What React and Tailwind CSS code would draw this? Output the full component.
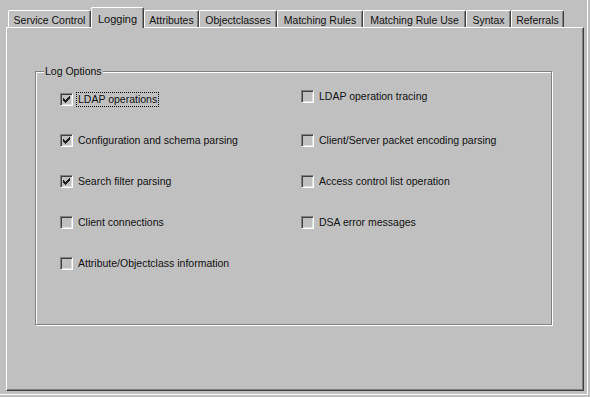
import React from 'react';

const tabs = [
  { label: 'Service Control', w: 'w-[83px]' },
  { label: 'Logging', w: 'w-[53px]', active: true },
  { label: 'Attributes', w: 'w-[55px]' },
  { label: 'Objectclasses', w: 'w-[78px]' },
  { label: 'Matching Rules', w: 'w-[86px]' },
  { label: 'Matching Rule Use', w: 'w-[103px]' },
  { label: 'Syntax', w: 'w-[45px]' },
  { label: 'Referrals', w: 'w-[53px]' },
];

const leftOptions = [
  { label: 'LDAP operations', checked: true, focused: true },
  { label: 'Configuration and schema parsing', checked: true },
  { label: 'Search filter parsing', checked: true },
  { label: 'Client connections' },
  { label: 'Attribute/Objectclass information' },
];

const rightOptions = [
  { label: 'LDAP operation tracing' },
  { label: 'Client/Server packet encoding parsing' },
  { label: 'Access control list operation' },
  { label: 'DSA error messages' },
];

function Checkbox({ checked }) {
  return (
    <div className="w-[13px] h-[13px] shrink-0 border-t border-l border-[#808080] border-r-white border-b-white border-r border-b bg-[#c0c0c0] shadow-[inset_1px_1px_0_#404040,inset_-1px_-1px_0_#dfdfdf] flex items-center justify-center">
      {checked && (
        <svg width="7" height="7" viewBox="0 0 7 7" shapeRendering="crispEdges" className="text-[#202020]">
          <path fill="currentColor" d="M6 0h1v3h-1zM5 1h1v3h-1zM4 2h1v3h-1zM3 3h1v3h-1zM2 4h1v3h-1zM1 3h1v3h-1zM0 2h1v3h-1z" />
        </svg>
      )}
    </div>
  );
}

function Option({ label, checked, focused }) {
  return (
    <div className="h-[15px] flex items-center gap-[4px]">
      <Checkbox checked={checked} />
      <span
        className={
          'leading-[13px] px-[1px] whitespace-nowrap ' +
          (focused ? 'outline outline-1 outline-dotted outline-black' : '')
        }
      >
        {label}
      </span>
    </div>
  );
}

export default function App() {
  return (
    <div className="w-[590px] h-[397px] bg-[#c0c0c0] text-[#111] text-[10.5px] font-['Liberation_Sans',Arial,sans-serif]">
      <div className="w-[588px] h-[395px] border-r border-b border-white flex flex-col pl-[6px] pt-[7px]">
        <div className="h-[20px] flex items-end pl-[2px]">
          {tabs.map((t) =>
            t.active ? (
              <div
                key={t.label}
                className={`${t.w} h-[21px] -mb-px relative z-10 bg-[#c0c0c0] border-l border-t border-white border-r border-r-[#404040] shadow-[inset_-1px_0_0_#808080] rounded-t-[2px] flex items-start justify-center pt-[3px] whitespace-nowrap text-[11px]`}
              >
                {t.label}
              </div>
            ) : (
              <div
                key={t.label}
                className={`${t.w} h-[17px] border-l border-t border-white border-r border-r-[#404040] shadow-[inset_-1px_0_0_#808080] rounded-t-[2px] flex items-start justify-center pt-[2px] whitespace-nowrap`}
              >
                {t.label}
              </div>
            )
          )}
        </div>
        <div className="w-[578px] h-[364px] border-l border-t border-white border-r border-b border-r-[#404040] border-b-[#404040] shadow-[inset_-1px_-1px_0_#808080] pl-[28px] pt-[43px]">
          <div className="relative w-[517px] h-[254px] border border-[#808080] shadow-[inset_1px_1px_0_#fff,1px_1px_0_#fff] pl-[24px] pt-[17px]">
            <span className="absolute left-[8px] -top-[7px] bg-[#c0c0c0] px-[1px] leading-[13px]">
              Log Options
            </span>
            <div className="grid grid-cols-[241px_1fr]">
              <div className="flex flex-col gap-[26px] mt-[3px]">
                {leftOptions.map((o) => (
                  <Option key={o.label} {...o} />
                ))}
              </div>
              <div className="flex flex-col gap-[26px]">
                {rightOptions.map((o, i) => (
                  <div key={o.label} className={i === 0 ? 'mb-[3px]' : ''}>
                    <Option {...o} />
                  </div>
                ))}
              </div>
            </div>
          </div>
        </div>
      </div>
    </div>
  );
}
